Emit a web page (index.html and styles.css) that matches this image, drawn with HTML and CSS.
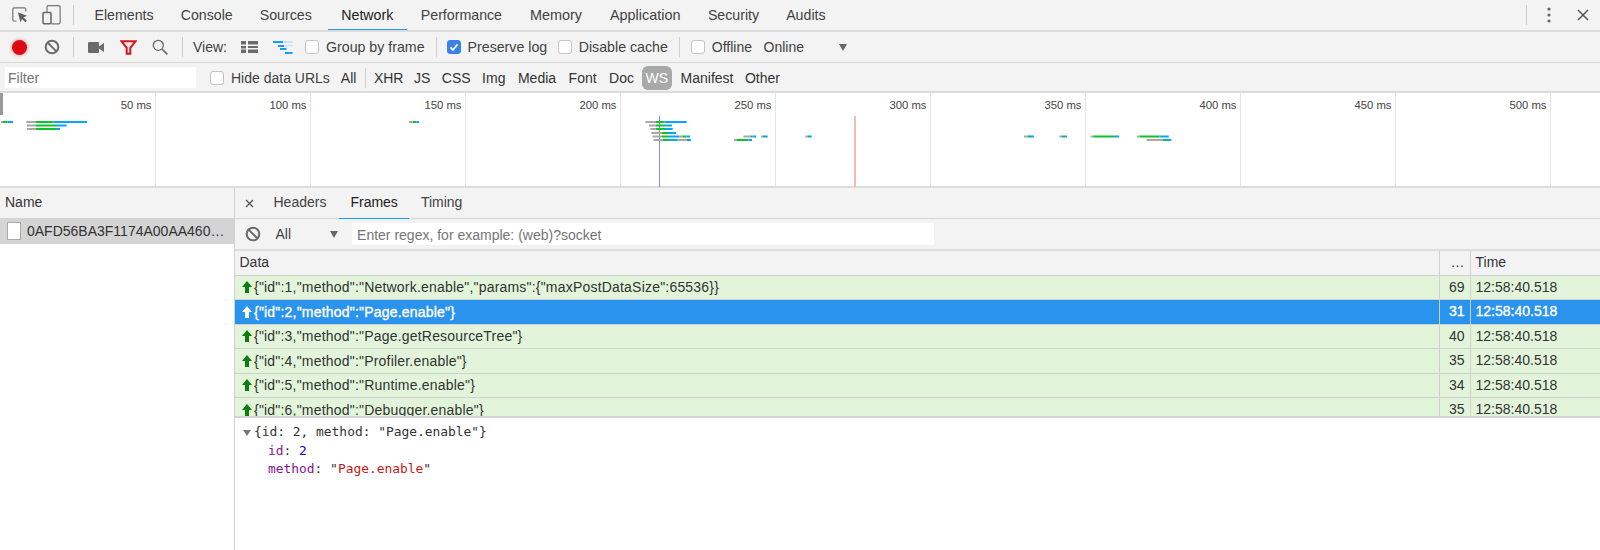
FILE: index.html
```html
<!DOCTYPE html>
<html lang="en">
<head>
<meta charset="utf-8">
<title>DevTools Network</title>
<link rel="stylesheet" href="styles.css">
</head>
<body>
<div class="app">
  <header class="tabbar">
    <svg class="ic inspect" width="18" height="18" viewBox="0 0 18 18"><path d="M5.500 15H3a1.200 1.200 0 0 1-1.200-1.200V3A1.200 1.200 0 0 1 3 1.800h10.500a1.200 1.200 0 0 1 1.200 1.200v2.500" fill="none" stroke="#767676" stroke-width="1.200"/><path d="M7 6.500l9 3.300-3.500 1.600 3.400 3.400-1.500 1.500-3.400-3.400-1.500 3.500z" fill="#5f5f5f"/></svg>
    <svg class="ic device" width="19" height="20" viewBox="0 0 19 20"><path d="M5 7V2a1.300 1.300 0 0 1 1.300-1.300h10.500A1.300 1.300 0 0 1 18.100 2v15.500a1.300 1.300 0 0 1-1.300 1.300H9.500" fill="none" stroke="#767676" stroke-width="1.200"/><rect x="1" y="7.500" width="8" height="11.300" rx="1" fill="none" stroke="#6a6a6a" stroke-width="1.600"/></svg>
    <span class="vsep tabsep"></span>
    <nav class="tabs">
      <span class="tab">Elements</span>
      <span class="tab">Console</span>
      <span class="tab">Sources</span>
      <span class="tab active">Network</span>
      <span class="tab pad">Performance</span>
      <span class="tab pad big">Memory</span>
      <span class="tab pad big">Application</span>
      <span class="tab">Security</span>
      <span class="tab">Audits</span>
    </nav>
    <span class="grow"></span>
    <span class="vsep endsep"></span>
    <svg class="dots" width="4" height="16" viewBox="0 0 4 16"><circle cx="2" cy="2" r="1.600" fill="#666"/><circle cx="2" cy="8" r="1.600" fill="#666"/><circle cx="2" cy="14" r="1.600" fill="#666"/></svg>
    <svg class="close" width="12" height="12" viewBox="0 0 12 12"><path d="M1 1l10 10M11 1L1 11" stroke="#555" stroke-width="1.500" fill="none"/></svg>
  </header>

  <div class="toolbar">
    <span class="record"></span>
    <svg class="clear c1" width="16" height="16" viewBox="0 0 16 16"><circle cx="8" cy="8" r="6.300" fill="none" stroke="#6a6a6a" stroke-width="2"/><path d="M3.600 3.600l8.800 8.800" stroke="#6a6a6a" stroke-width="2"/></svg>
    <span class="vsep s1"></span>
    <svg class="cam" width="16" height="11" viewBox="0 0 16 11"><rect x="0" y="0" width="11" height="11" rx="1" fill="#6a6a6a"/><path d="M11 4.500L16 1v9l-5-3.500z" fill="#6a6a6a"/></svg>
    <svg class="funnel" width="17" height="15" viewBox="0 0 17 15"><path d="M1.500 1.200h14L10.300 7.800v5.900H6.700V7.800z" fill="#fbe9e9" stroke="#d8171e" stroke-width="2"/></svg>
    <svg class="search" width="16" height="16" viewBox="0 0 16 16"><circle cx="6.300" cy="6.300" r="5" fill="none" stroke="#6a6a6a" stroke-width="1.300"/><path d="M10 10l5.300 5.300" stroke="#6a6a6a" stroke-width="1.700"/></svg>
    <span class="vsep s2"></span>
    <span class="lbl view">View:</span>
    <svg class="listic" width="17" height="12" viewBox="0 0 17 12"><path d="M0 0h5v3.500H0zM7 0h10v3.500H7zM0 5h5v2.500H0zM7 5h10v2H7zM0 8.500h5v3.500H0zM7 8.500h10v3.500H7z" fill="#6a6a6a"/></svg>
    <svg class="wfall" width="20" height="13" viewBox="0 0 20 13"><path d="M0 0h10v2H0zM5 4h6v2H5zM7 7h6.500v2H7zM12 11h7.500v2H12z" fill="#1a9df2"/><path d="M10 0h9.500v2H10zM11 4h8.500v1.500H11z" fill="#bfe3fb"/></svg>
    <label class="chk g1"><span class="box"></span><span class="wide">Group by frame</span></label>
    <span class="vsep s3"></span>
    <label class="chk g2"><span class="box on"><svg width="12" height="12" viewBox="0 0 12 12"><path d="M2.500 6.300l2.500 2.600 4.500-5.500" fill="none" stroke="#fff" stroke-width="1.700"/></svg></span><span class="wide">Preserve log</span></label>
    <label class="chk g3"><span class="box"></span><span class="wide">Disable cache</span></label>
    <span class="vsep s4"></span>
    <label class="chk g4"><span class="box"></span>Offline</label>
    <span class="lbl online">Online</span>
    <span class="tri t1"></span>
  </div>

  <div class="filterbar">
    <span class="input filter">Filter</span>
    <label class="chk hide"><span class="box"></span>Hide data URLs</label>
    <span class="ft all">All</span>
    <span class="vsep s5"></span>
    <span class="ft">XHR</span>
    <span class="ft tight">JS</span>
    <span class="ft">CSS</span>
    <span class="ft">Img</span>
    <span class="ft loose">Media</span>
    <span class="ft loose">Font</span>
    <span class="ft loose">Doc</span>
    <span class="ft ws">WS</span>
    <span class="ft">Manifest</span>
    <span class="ft">Other</span>
  </div>

  <section class="overview">
    <div class="ticks">
      <span class="tickc">50 ms</span><span class="tickc">100 ms</span><span class="tickc">150 ms</span><span class="tickc">200 ms</span><span class="tickc">250 ms</span><span class="tickc">300 ms</span><span class="tickc">350 ms</span><span class="tickc">400 ms</span><span class="tickc">450 ms</span><span class="tickc">500 ms</span><span class="tickc last"></span>
    </div>
    <span class="handle"></span>
    <svg class="chart" width="1600" height="94" viewBox="0 93 1600 94">
      <rect class="dom" x="659" y="116" width="1" height="71"/>
      <rect class="load" x="854.300" y="116" width="1.500" height="71"/>
      <g class="q"><rect x="1" y="121" width="2" height="2"/><rect x="26.400" y="121" width="9.600" height="2"/><rect x="27" y="124.500" width="8.500" height="2"/><rect x="27" y="128" width="9" height="2"/><rect x="409" y="121" width="3.500" height="2"/><rect x="645.400" y="121" width="10.600" height="2"/><rect x="649" y="124.500" width="7" height="2"/><rect x="650.400" y="128" width="5.600" height="2"/><rect x="651.400" y="132" width="8.600" height="2"/><rect x="652.500" y="135.500" width="9.500" height="2"/><rect x="653.500" y="139" width="9" height="2"/><rect x="679" y="135.500" width="3.500" height="2"/><rect x="677.500" y="139" width="9.500" height="2"/><rect x="743.400" y="135.500" width="7.600" height="2"/><rect x="761" y="135.500" width="2" height="2"/><rect x="734" y="139" width="2.600" height="2"/><rect x="805.300" y="135.500" width="2.300" height="2"/><rect x="1024" y="135.500" width="3.700" height="2"/><rect x="1059.500" y="135.500" width="2.500" height="2"/><rect x="1090.700" y="135.500" width="3" height="2"/><rect x="1137" y="135.500" width="2.700" height="2"/><rect x="1146.600" y="139" width="16.400" height="2"/></g>
      <g class="r"><rect x="3" y="121" width="4.500" height="2"/><rect x="36" y="121" width="17.400" height="2"/><rect x="35.500" y="124.500" width="21.500" height="2"/><rect x="36" y="128" width="20" height="2"/><rect x="412.500" y="121" width="4" height="2"/><rect x="656" y="121" width="8.600" height="2"/><rect x="656" y="124.500" width="9" height="2"/><rect x="656" y="128" width="9" height="2"/><rect x="662" y="132" width="6" height="2"/><rect x="662" y="135.500" width="6" height="2"/><rect x="662.600" y="139" width="6.400" height="2"/><rect x="682.500" y="135.500" width="4" height="2"/><rect x="687" y="139" width="4" height="2"/><rect x="736.600" y="139" width="11.900" height="2"/><rect x="751" y="135.500" width="1.500" height="2"/><rect x="763" y="135.500" width="1.500" height="2"/><rect x="807.600" y="135.500" width="1.500" height="2"/><rect x="1027.700" y="135.500" width="2" height="2"/><rect x="1062" y="135.500" width="2" height="2"/><rect x="1093.500" y="135.500" width="21.300" height="2"/><rect x="1139.700" y="135.500" width="19.900" height="2"/><rect x="1163" y="139" width="3" height="2"/></g>
      <g class="b"><rect x="7.500" y="121" width="5.500" height="2"/><rect x="53.400" y="121" width="33.600" height="2"/><rect x="57" y="124.500" width="9.600" height="2"/><rect x="56" y="128" width="4" height="2"/><rect x="416.500" y="121" width="2.500" height="2"/><rect x="664.600" y="121" width="22" height="2"/><rect x="665" y="124.500" width="7" height="2"/><rect x="665" y="128" width="7.700" height="2"/><rect x="668" y="132" width="8" height="2"/><rect x="668" y="135.500" width="11" height="2"/><rect x="669" y="139" width="8.500" height="2"/><rect x="686.500" y="135.500" width="3.500" height="2"/><rect x="688" y="139" width="3" height="2"/><rect x="748.500" y="139" width="3.500" height="2"/><rect x="752.500" y="135.500" width="3.700" height="2"/><rect x="764" y="135.500" width="3.700" height="2"/><rect x="809" y="135.500" width="2.700" height="2"/><rect x="1029" y="135.500" width="5" height="2"/><rect x="1064" y="135.500" width="3" height="2"/><rect x="1114.800" y="135.500" width="4.200" height="2"/><rect x="1159.600" y="135.500" width="9.200" height="2"/><rect x="1166" y="139" width="5.400" height="2"/></g>
      <g class="o"><rect x="660" y="132" width="2" height="2"/></g>
    </svg>
  </section>

  <main class="split">
    <aside class="names">
      <div class="nameshead">Name</div>
      <div class="namerow">
        <span class="file"></span>
        <span class="fname">0AFD56BA3F1174A00AA460…</span>
      </div>
    </aside>
    <section class="detail">
      <div class="dtabs">
        <svg class="dx" width="9" height="9" viewBox="0 0 9 9"><path d="M1 1l7 7M8 1L1 8" stroke="#555" stroke-width="1.300" fill="none"/></svg>
        <span class="dtab">Headers</span>
        <span class="dtab active">Frames</span>
        <span class="dtab">Timing</span>
      </div>
      <div class="ftoolbar">
        <svg class="clear c2" width="16" height="16" viewBox="0 0 16 16"><circle cx="8" cy="8" r="6.300" fill="none" stroke="#6a6a6a" stroke-width="2"/><path d="M3.600 3.600l8.800 8.800" stroke="#6a6a6a" stroke-width="2"/></svg>
        <span class="lbl fall">All</span>
        <span class="tri t2"></span>
        <span class="input regex">Enter regex, for example: (web)?socket</span>
      </div>
      <div class="frames">
        <div class="row head"><span class="cd">Data</span><span class="cl">…</span><span class="ct">Time</span></div>
        <div class="row"><span class="cd"><svg class="up" width="10" height="12" viewBox="0 0 10 12"><path d="M5 0l5 6H7v6H3V6H0z"/></svg><span class="json">{"id":1,"method":"Network.enable","params":{"maxPostDataSize":65536}}</span></span><span class="cl">69</span><span class="ct">12:58:40.518</span></div>
        <div class="row sel"><span class="cd"><svg class="up" width="10" height="12" viewBox="0 0 10 12"><path d="M5 0l5 6H7v6H3V6H0z"/></svg><span class="json">{"id":2,"method":"Page.enable"}</span></span><span class="cl">31</span><span class="ct">12:58:40.518</span></div>
        <div class="row"><span class="cd"><svg class="up" width="10" height="12" viewBox="0 0 10 12"><path d="M5 0l5 6H7v6H3V6H0z"/></svg><span class="json">{"id":3,"method":"Page.getResourceTree"}</span></span><span class="cl">40</span><span class="ct">12:58:40.518</span></div>
        <div class="row"><span class="cd"><svg class="up" width="10" height="12" viewBox="0 0 10 12"><path d="M5 0l5 6H7v6H3V6H0z"/></svg><span class="json">{"id":4,"method":"Profiler.enable"}</span></span><span class="cl">35</span><span class="ct">12:58:40.518</span></div>
        <div class="row"><span class="cd"><svg class="up" width="10" height="12" viewBox="0 0 10 12"><path d="M5 0l5 6H7v6H3V6H0z"/></svg><span class="json">{"id":5,"method":"Runtime.enable"}</span></span><span class="cl">34</span><span class="ct">12:58:40.518</span></div>
        <div class="row"><span class="cd"><svg class="up" width="10" height="12" viewBox="0 0 10 12"><path d="M5 0l5 6H7v6H3V6H0z"/></svg><span class="json">{"id":6,"method":"Debugger.enable"}</span></span><span class="cl">35</span><span class="ct">12:58:40.518</span></div>
      </div>
      <div class="preview">
        <div class="pl"><span class="ptri"></span>{id: 2, method: "Page.enable"}</div>
        <div class="pl in"><span class="key">id</span>: <span class="num">2</span></div>
        <div class="pl in"><span class="key">method</span>: "<span class="str">Page.enable</span>"</div>
      </div>
    </section>
  </main>
</div>
</body>
</html>
```

FILE: styles.css
```css
* { box-sizing: border-box; }
html, body { margin: 0; padding: 0; background: #fff; }
body { font-family: "Liberation Sans", Arial, sans-serif; font-size: 14px; color: #333; overflow: hidden; }
.app { width: 1600px; height: 550px; display: flex; flex-direction: column; overflow: hidden; }
svg { display: block; flex: none; }
.grow { flex: 1; }
.vsep { width: 1px; height: 20px; background: #cfcfcf; flex: none; }

.tabbar { height: 32px; flex: none; display: flex; align-items: center; background: #f3f3f3; border-bottom: 2px solid #dcdcdc; }
.inspect { margin-left: 11px; }
.device { margin-left: 13px; }
.tabsep { margin-left: 12px; }
.tabs { display: flex; align-self: stretch; margin-left: 7px; }
.tab { padding: 0 13.500px; line-height: 30px; height: 30px; color: #424242; white-space: nowrap; font-size: 14.200px; }
.tab.active { color: #222; border-bottom: 1px solid #1a9df2; margin-left: 2.500px; }
.tab.pad { padding: 0 14px; }
.tab.big { font-size: 14.400px; }
.endsep { margin-right: 20px; }
.dots { margin-right: 26px; }
.close { margin-right: 11px; }

.toolbar { height: 31px; flex: none; display: flex; align-items: center; background: #f3f3f3; border-bottom: 1px solid #d6d6d6; }
.record { width: 15px; height: 15px; border-radius: 50%; background: #dc0a14; box-shadow: 0 0 3px 1px rgba(220,10,20,.3); margin-left: 12px; flex: none; }
.c1 { margin-left: 17px; }
.s1 { margin-left: 13px; }
.cam { margin-left: 14px; }
.funnel { margin-left: 15.500px; }
.search { margin-left: 15.500px; }
.s2 { margin-left: 14px; }
.lbl { white-space: nowrap; color: #424242; }
.view { margin-left: 10px; }
.listic { margin-left: 14px; }
.wfall { margin-left: 15px; }
.chk { display: flex; align-items: center; gap: 7px; white-space: nowrap; color: #424242; flex: none; }
.wide { font-size: 14.200px; }
.box { width: 14px; height: 14px; border-radius: 3px; background: #fff; border: 1px solid #c4c4c4; flex: none; display: block; }
.box.on { background: #3b82e8; border-color: #3b82e8; }
.g1 { margin-left: 12px; }
.s3 { margin-left: 11px; }
.g2 { margin-left: 10px; }
.g3 { margin-left: 10.500px; }
.s4 { margin-left: 11px; }
.g4 { margin-left: 11px; }
.online { margin-left: 11.500px; }
.tri { width: 0; height: 0; border-left: 4px solid transparent; border-right: 4px solid transparent; border-top: 7px solid #666; flex: none; }
.t1 { margin-left: 34.500px; }

.filterbar { height: 30px; flex: none; display: flex; align-items: center; padding-top: 1px; background: #f3f3f3; border-bottom: 2px solid #dcdcdc; }
.input { background: #fff; display: block; color: #757575; white-space: nowrap; }
.filter { width: 191px; height: 21px; line-height: 22px; margin-left: 5px; padding-left: 3px; }
.hide { margin-left: 14px; }
.ft { color: #333; white-space: nowrap; margin-left: 11.500px; flex: none; }
.ft.tight { margin-left: 10.500px; }
.ft.loose { margin-left: 12.500px; }
.all { margin-left: 11px; }
.s5 { margin-left: 8.500px; margin-right: -3.500px; }
.ft.ws { background: #a8a8a8; color: #fff; height: 24px; line-height: 24px; padding: 0 3.500px; border-radius: 6px; margin-left: 8px; margin-right: -2.500px; }

.overview { height: 95px; flex: none; position: relative; background: #fff; border-bottom: 2px solid #dcdcdc; }
.ticks { display: flex; height: 100%; }
.tickc { width: 155px; flex: none; text-align: right; border-right: 1px solid #e4e4e4; padding: 4px 3px 0 0; font-size: 11.300px; color: #444; line-height: 16px; }
.tickc:first-child { width: 155.500px; }
.tickc.last { flex: 1; border-right: 0; }
.handle { position: absolute; left: 0; top: 0; width: 2.500px; height: 22px; background: #9a9a9a; }
.chart { position: absolute; left: 0; top: 0; }
.dom { fill: #8888f5; }
.load { fill: #f5a3a3; }
.q rect { fill: #a8a8a8; }
.r rect { fill: #0fc12e; }
.b rect { fill: #06a6fb; }
.o rect { fill: #f5a623; }

.split { flex: 1; display: flex; min-height: 0; }
.names { width: 234.500px; flex: none; border-right: 1px solid #d0d0d0; background: #fff; }
.nameshead { height: 30px; line-height: 29px; padding-left: 5px; background: #f3f3f3; color: #333; }
.namerow { height: 26px; display: flex; align-items: center; padding-left: 7px; gap: 6px; background: #d4d4d4; }
.file { width: 14px; height: 18px; background: #fff; border: 1px solid #a9a9a9; flex: none; display: block; }
.fname { white-space: nowrap; color: #333; }

.detail { flex: 1; min-width: 0; display: flex; flex-direction: column; }
.dtabs { height: 31px; flex: none; display: flex; align-items: stretch; background: #f3f3f3; border-bottom: 1px solid #d6d6d6; }
.dx { margin: 11px 0 0 10.500px; }
.dtab { padding: 0 11.500px; line-height: 29px; height: 31px; color: #424242; }
.dtab:nth-child(2) { margin-left: 8px; margin-right: 1px; }
.dtab.active { color: #222; border-bottom: 1px solid #1a9df2; margin-right: 0; }
.ftoolbar { height: 32px; flex: none; display: flex; align-items: center; background: #f3f3f3; border-bottom: 2px solid #dcdcdc; }
.c2 { margin-left: 10.500px; }
.fall { margin-left: 14.500px; }
.t2 { margin-left: 39px; }
.regex { width: 582px; height: 22px; line-height: 24px; margin-left: 13.500px; padding-left: 5.500px; }
.frames { height: 167px; flex: none; overflow: hidden; border-bottom: 2px solid #d4d4d4; }
.row { display: flex; height: 24.500px; background: #e2f5da; border-bottom: 1.500px solid #d0d0d0; color: #333; line-height: 23.500px; }
.row.sel { background: #2a93ee; color: #fff; -webkit-text-stroke: .35px #fff; }
.row.head { background: #f3f3f3; }
.cd { flex: 1; min-width: 0; display: flex; align-items: center; padding-left: 7px; white-space: pre; }
.head .cd { padding-left: 5px; }
.json { letter-spacing: .2px; padding-top: 1px; }
.cl { width: 31px; flex: none; text-align: right; padding-right: 5px; border-left: 1.500px solid #d0d0d0; }
.ct { width: 130.500px; flex: none; padding-left: 5px; border-left: 1.500px solid #d0d0d0; }
.up { margin-right: 2.500px; fill: #0a7d0a; }
.sel .up { fill: #fff; }
.preview { flex: 1; background: #fff; padding-top: 5px; font-family: "DejaVu Sans Mono", monospace; font-size: 12.900px; line-height: 18.500px; color: #333; }
.pl { padding-left: 19.500px; position: relative; white-space: pre; }
.pl.in { padding-left: 33.500px; }
.ptri { position: absolute; left: 8px; top: 6.500px; width: 0; height: 0; border-left: 4px solid transparent; border-right: 4px solid transparent; border-top: 6px solid #777; }
.key { color: #881391; }
.num { color: #1c00cf; }
.str { color: #c41a16; }
```
